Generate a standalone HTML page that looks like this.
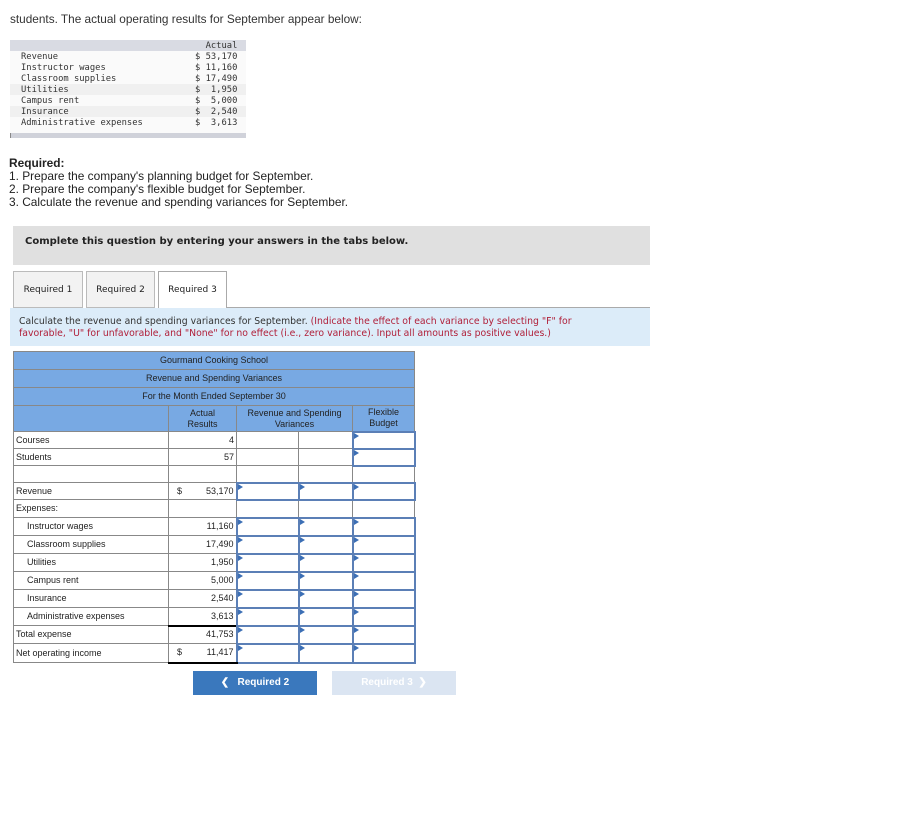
<!DOCTYPE html>
<html><head><meta charset="utf-8"><style>
*{box-sizing:border-box;margin:0;padding:0}
body{width:918px;height:834px;background:#fff;font-family:"Liberation Sans",Arial,sans-serif;color:#222;position:relative;overflow:hidden}
.abs{position:absolute}
.mono{font-family:"DejaVu Sans Mono","Liberation Mono",monospace;font-size:8.8px;color:#333;line-height:11px}
.req{font-size:11.9px;line-height:13px;color:#222}
.dv{font-family:"DejaVu Sans",Verdana,sans-serif}
table.v{position:absolute;left:13px;top:351px;border-collapse:collapse;font-size:9px;color:#222;line-height:11px}
table.v td{border:1px solid #888;padding:0 2px;height:18px;white-space:nowrap}
.hd td{background:#78a9e3;text-align:center;font-weight:normal}
.r{text-align:right}
.in{border:2px solid #5b7fb6 !important;position:relative}
.in:before{content:"";position:absolute;left:0;top:0;border-left:5px solid #3c6fb5;border-bottom:3px solid transparent;border-top:3px solid transparent}
.ind{padding-left:13px !important}
tr.s td{height:17px}
</style></head><body>
<div class="abs" style="left:10px;top:12px;font-size:11.8px;color:#333">students. The actual operating results for September appear below:</div>
<div class="abs" style="left:10px;top:40px;width:236px;height:11px;background:#d9dbe3"></div>
<div class="abs" style="left:10px;top:51px;width:236px;height:83px;background:#fafafa"></div>
<div class="abs" style="left:10px;top:84px;width:236px;height:11px;background:#f0f0f0"></div>
<div class="abs" style="left:10px;top:106px;width:236px;height:11px;background:#f0f0f0"></div>
<div class="abs" style="left:10px;top:133px;width:236px;height:5px;background:#d0d2da;border-left:1px solid #888"></div>
<div class="abs mono" style="left:21px;top:52px">Revenue<br>Instructor wages<br>Classroom supplies<br>Utilities<br>Campus rent<br>Insurance<br>Administrative expenses</div>
<div class="abs mono" style="left:195px;top:41px;white-space:pre">  Actual
$ 53,170
$ 11,160
$ 17,490
$  1,950
$  5,000
$  2,540
$  3,613</div>
<div class="abs req" style="left:9px;top:157px"><b>Required:</b><br>1. Prepare the company's planning budget for September.<br>2. Prepare the company's flexible budget for September.<br>3. Calculate the revenue and spending variances for September.</div>
<div class="abs dv" style="left:13px;top:226px;width:637px;height:39px;background:#e0e0e0;font-size:10px;font-weight:bold;padding:10px 0 0 12px">Complete this question by entering your answers in the tabs below.</div>
<div class="abs dv" style="left:13px;top:271px;width:70px;height:37px;background:#f2f2f2;border:1px solid #bbb;font-size:9px;text-align:center;line-height:36px">Required 1</div>
<div class="abs dv" style="left:86px;top:271px;width:69px;height:37px;background:#f2f2f2;border:1px solid #bbb;font-size:9px;text-align:center;line-height:36px">Required 2</div>
<div class="abs dv" style="left:158px;top:271px;width:69px;height:38px;background:#fff;border:1px solid #aaa;border-bottom:none;font-size:9px;text-align:center;line-height:36px">Required 3</div>
<div class="abs" style="left:227px;top:307px;width:423px;height:1px;background:#aaa"></div>
<div class="abs dv" style="left:10px;top:308px;width:640px;height:38px;background:#dcecf9;font-size:9.3px;line-height:12px;padding:8px 40px 0 9px;color:#333">Calculate the revenue and spending variances for September. <span style="color:#b0203a">(Indicate the effect of each variance by selecting "F" for favorable, "U" for unfavorable, and "None" for no effect (i.e., zero variance). Input all amounts as positive values.)</span></div>
<table class="v">
<colgroup><col style="width:155px"><col style="width:68px"><col style="width:62px"><col style="width:54px"><col style="width:62px"></colgroup>
<tr class="hd"><td colspan="5">Gourmand Cooking School</td></tr>
<tr class="hd"><td colspan="5">Revenue and Spending Variances</td></tr>
<tr class="hd"><td colspan="5">For the Month Ended September 30</td></tr>
<tr class="hd"><td style="height:26px"></td><td>Actual<br>Results</td><td colspan="2">Revenue and Spending<br>Variances</td><td>Flexible<br>Budget</td></tr>
<tr class="s"><td>Courses</td><td class="r">4</td><td></td><td></td><td class="in"></td></tr>
<tr class="s"><td>Students</td><td class="r">57</td><td></td><td></td><td class="in"></td></tr>
<tr class="s"><td></td><td></td><td></td><td></td><td></td></tr>
<tr class="s"><td>Revenue</td><td class="r"><span style="float:left;padding-left:6px">$</span>53,170</td><td class="in"></td><td class="in"></td><td class="in"></td></tr>
<tr><td>Expenses:</td><td></td><td></td><td></td><td></td></tr>
<tr><td class="ind">Instructor wages</td><td class="r">11,160</td><td class="in"></td><td class="in"></td><td class="in"></td></tr>
<tr><td class="ind">Classroom supplies</td><td class="r">17,490</td><td class="in"></td><td class="in"></td><td class="in"></td></tr>
<tr><td class="ind">Utilities</td><td class="r">1,950</td><td class="in"></td><td class="in"></td><td class="in"></td></tr>
<tr><td class="ind">Campus rent</td><td class="r">5,000</td><td class="in"></td><td class="in"></td><td class="in"></td></tr>
<tr><td class="ind">Insurance</td><td class="r">2,540</td><td class="in"></td><td class="in"></td><td class="in"></td></tr>
<tr><td class="ind">Administrative expenses</td><td class="r">3,613</td><td class="in"></td><td class="in"></td><td class="in"></td></tr>
<tr><td>Total expense</td><td class="r" style="border-top:2px solid #000">41,753</td><td class="in"></td><td class="in"></td><td class="in"></td></tr>
<tr><td style="height:19px">Net operating income</td><td class="r" style="border-bottom:2px solid #000"><span style="float:left;padding-left:6px">$</span>11,417</td><td class="in"></td><td class="in"></td><td class="in"></td></tr>
</table>
<div class="abs" style="left:193px;top:671px;width:124px;height:24px;background:#3a78bd;color:#fff;font-size:10px;font-weight:bold;text-align:center;line-height:24px">&#10094;&nbsp;&nbsp; Required 2</div>
<div class="abs" style="left:332px;top:671px;width:124px;height:24px;background:#dbe5f2;color:#fff;font-size:10px;font-weight:bold;text-align:center;line-height:24px">Required 3 &nbsp;&#10095;</div>
</body></html>
